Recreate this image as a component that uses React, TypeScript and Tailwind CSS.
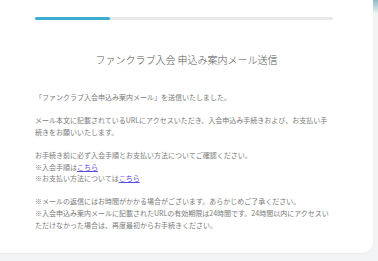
export default function App() {
  return (
    <div className="relative h-[261px] w-[378px] overflow-hidden bg-[#f3f4f5]" style={{ fontFamily: '"Noto Sans CJK JP", "Noto Sans", sans-serif' }}>
      {/* 右上の端にかかる装飾 */}
      <div className="absolute right-0 top-0 h-[14px] w-[5px] bg-gradient-to-b from-[#8fb9c9] to-transparent" />

      <div className="h-[253px] w-[373px] rounded-br-[10px] bg-white px-[35px] pt-[17px] shadow-[0_1px_2px_rgba(0,0,0,0.04)]">
        {/* Progress */}
        <div className="h-[3px] w-[298px] rounded-full bg-[#e6e8ea]">
          <div className="h-full w-[75px] rounded-full bg-[#3aaed0]" />
        </div>

        <h1 className="mt-[33px] text-center text-[10px] font-light leading-[14px] text-[#555]">
          ファンクラブ入会 申込み案内メール送信
        </h1>

        <div className="mt-[25px] w-[298px] text-[7px] leading-[11.6px] text-[#7a7a7a]">
          <p>「ファンクラブ入会申込み案内メール」を送信いたしました。</p>
          <p className="mt-[11.6px]">
            メール本文に記載されているURLにアクセスいただき、入会申込み手続きおよび、お支払い手続きをお願いいたします。
          </p>
          <p className="mt-[11.6px]">
            お手続き前に必ず入会手順とお支払い方法についてご確認ください。
            <br />
            ※入会手順は<a href="#" className="text-[#5b4fe6] underline">こちら</a>
            <br />
            ※お支払い方法については<a href="#" className="text-[#5b4fe6] underline">こちら</a>
          </p>
          <p className="mt-[11.6px]">
            ※メールの返信にはお時間がかかる場合がございます。あらかじめご了承ください。
            <br />
            ※入会申込み案内メールに記載されたURLの有効期限は24時間です。24時間以内にアクセスいただけなかった場合は、再度最初からお手続きください。
          </p>
        </div>
      </div>
    </div>
  );
}
